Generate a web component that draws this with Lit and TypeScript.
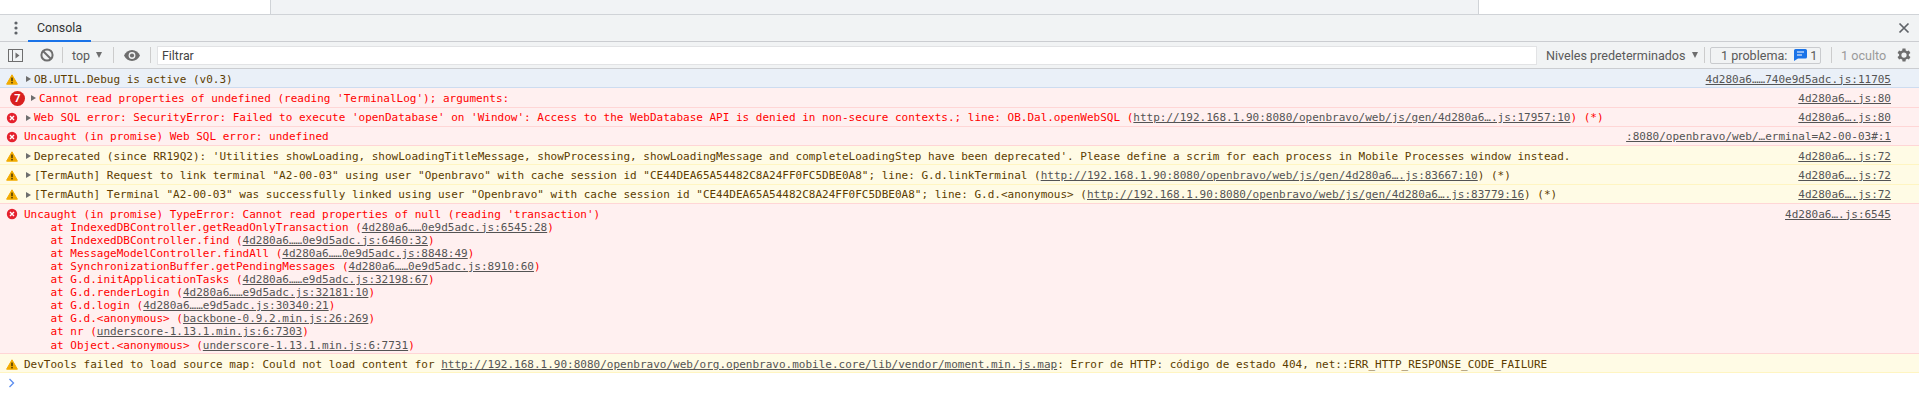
import { LitElement, html, css, svg } from "lit";
import { customElement } from "lit/decorators.js";

const warnIcon = svg`<svg class="ic" width="12" height="11" viewBox="0 0 12 11"><path d="M6 .8 L11.4 10.2 H.6 Z" fill="#f2ab00" stroke="#f2ab00" stroke-linejoin="round"/><rect x="5.3" y="3.6" width="1.4" height="3.6" fill="#3d2f00"/><rect x="5.3" y="8" width="1.4" height="1.4" fill="#3d2f00"/></svg>`;
const errIcon = svg`<svg class="ic" width="12" height="12" viewBox="0 0 12 12"><circle cx="6" cy="6" r="5.2" fill="#e5222e"/><path d="M4 4 L8 8 M8 4 L4 8" stroke="#fff" stroke-width="1.4"/></svg>`;
const A = (t: string) => html`<a>${t}</a>`;
const BASE = "http://192.168.1.90:8080/openbravo/web/js/gen/4d280a6….js";

type Row = { kind: string; icon: any; arrow?: boolean; msg: any; src: string; badge?: boolean };
const rows: Row[] = [
  { kind: "info", icon: warnIcon, arrow: true, msg: "OB.UTIL.Debug is active (v0.3)", src: "4d280a6……740e9d5adc.js:11705" },
  { kind: "err", icon: null, badge: true, arrow: true, msg: "Cannot read properties of undefined (reading 'TerminalLog'); arguments: ", src: "4d280a6….js:80" },
  { kind: "err", icon: errIcon, arrow: true, msg: html`Web SQL error: SecurityError: Failed to execute 'openDatabase' on 'Window': Access to the WebDatabase API is denied in non-secure contexts.; line: OB.Dal.openWebSQL (${A(BASE + ":17957:10")}) (*)`, src: "4d280a6….js:80" },
  { kind: "err", icon: errIcon, msg: "Uncaught (in promise) Web SQL error: undefined", src: ":8080/openbravo/web/…erminal=A2-00-03#:1" },
  { kind: "warn", icon: warnIcon, arrow: true, msg: "Deprecated (since RR19Q2): 'Utilities showLoading, showLoadingTitleMessage, showProcessing, showLoadingMessage and completeLoadingStep have been deprecated'. Please define a scrim for each process in Mobile Processes window instead.", src: "4d280a6….js:72" },
  { kind: "warn", icon: warnIcon, arrow: true, msg: html`[TermAuth] Request to link terminal "A2-00-03" using user "Openbravo" with cache session id "CE44DEA65A54482C8A24FF0FC5DBE0A8"; line: G.d.linkTerminal (${A(BASE + ":83667:10")}) (*)`, src: "4d280a6….js:72" },
  { kind: "warn", icon: warnIcon, arrow: true, msg: html`[TermAuth] Terminal "A2-00-03" was successfully linked using user "Openbravo" with cache session id "CE44DEA65A54482C8A24FF0FC5DBE0A8"; line: G.d.&lt;anonymous&gt; (${A(BASE + ":83779:16")}) (*)`, src: "4d280a6….js:72" },
  {
    kind: "err", icon: errIcon, src: "4d280a6….js:6545",
    msg: html`Uncaught (in promise) TypeError: Cannot read properties of null (reading 'transaction')
    at IndexedDBController.getReadOnlyTransaction (${A("4d280a6……0e9d5adc.js:6545:28")})
    at IndexedDBController.find (${A("4d280a6……0e9d5adc.js:6460:32")})
    at MessageModelController.findAll (${A("4d280a6……0e9d5adc.js:8848:49")})
    at SynchronizationBuffer.getPendingMessages (${A("4d280a6……0e9d5adc.js:8910:60")})
    at G.d.initApplicationTasks (${A("4d280a6……e9d5adc.js:32198:67")})
    at G.d.renderLogin (${A("4d280a6……e9d5adc.js:32181:10")})
    at G.d.login (${A("4d280a6……e9d5adc.js:30340:21")})
    at G.d.&lt;anonymous&gt; (${A("backbone-0.9.2.min.js:26:269")})
    at nr (${A("underscore-1.13.1.min.js:6:7303")})
    at Object.&lt;anonymous&gt; (${A("underscore-1.13.1.min.js:6:7731")})`,
  },
  { kind: "warn last", icon: warnIcon, msg: html`DevTools failed to load source map: Could not load content for ${A("http://192.168.1.90:8080/openbravo/web/org.openbravo.mobile.core/lib/vendor/moment.min.js.map")}: Error de HTTP: código de estado 404, net::ERR_HTTP_RESPONSE_CODE_FAILURE`, src: "" },
];

@customElement("app-root")
export class AppRoot extends LitElement {
  static styles = css`
    :host { display: block; width: 1919px; height: 401px; background: #fff; overflow: hidden; font-family: Roboto, "Liberation Sans", sans-serif; font-size: 12px; color: #5a5a5a; }
    .page { display: grid; grid-template-columns: 270px 1fr 440px; height: 14px; border-bottom: 1px solid #d0d3d7; }
    .page .mid { background: #f1f3f5; border-left: 1px solid #d0d3d7; border-right: 1px solid #d0d3d7; }
    .tabs { display: flex; align-items: stretch; height: 26px; background: #f1f3f4; border-bottom: 1px solid #cbcdd1; }
    .kebab { width: 28px; display: flex; align-items: center; justify-content: center; padding-left: 4px; box-sizing: border-box; }
    .tab { width: 63px; display: flex; align-items: center; justify-content: center; color: #333; border-bottom: 2px solid #1a73e8; margin-bottom: -1px; font-size: 12.4px; }
    .grow { flex: 1; }
    .close { width: 30px; display: flex; align-items: center; justify-content: center; }
    .bar { display: flex; align-items: center; height: 26px; background: #f1f3f4; border-bottom: 1px solid #cbcdd1; }
    .tool { display: flex; align-items: center; justify-content: center; }
    .tool.w31 { width: 31px; }
    .tool.w36 { width: 36px; }
    .sep { width: 1px; height: 16px; background: #ccc; flex: none; }
    .ctx { display: flex; align-items: center; gap: 6px; width: 50px; padding-left: 9px; box-sizing: border-box; font-size: 12.4px; }
    .tri { width: 0; height: 0; border-left: 3.5px solid transparent; border-right: 3.5px solid transparent; border-top: 6px solid #6e6e6e; }
    .filter { flex: 1; height: 19px; box-sizing: border-box; margin: 0 9px 0 6px; padding-left: 4px; background: #fff; border: 1px solid #e2e3e5; display: flex; align-items: center; color: #444; font-size: 12.4px; }
    .levels { display: flex; align-items: center; gap: 6px; width: 158px; font-size: 12.6px; white-space: nowrap; flex: none; }
    .issues { display: flex; align-items: center; box-sizing: border-box; width: 111px; height: 17px; margin-left: 5px; margin-right: 10px; padding-left: 10px; border: 1px solid #c9cbce; border-radius: 2px; font-size: 12.6px; white-space: nowrap; flex: none; }
    .issues svg { margin: 0 3px 0 7px; }
    .hidden { color: #9a9a9a; width: 63px; padding-left: 9px; font-size: 12.6px; box-sizing: border-box; white-space: nowrap; flex: none; }
    .gear { margin-right: 6px; flex: none; }
    .log { font-family: "DejaVu Sans Mono", monospace; font-size: 11px; line-height: 13.1px; }
    .row { display: flex; box-sizing: border-box; padding: 3.5px 28px 1.5px 0; border-bottom: 1px solid; min-height: 19.3px; white-space: pre; }
    .icon { width: 24px; flex: none; display: flex; justify-content: flex-start; padding-left: 6px; box-sizing: border-box; height: 13px; align-items: center; }
    .icon.badged { width: 29px; padding-left: 0; }
    .ic { display: block; }
    .arrow { width: 10px; flex: none; height: 13px; display: flex; align-items: center; }
    .arrow i { display: block; width: 0; height: 0; border-top: 3.5px solid transparent; border-bottom: 3.5px solid transparent; border-left: 5.5px solid #6e6e6e; margin-left: 2px; }
    .msg { flex: 1; min-width: 0; }
    .src { flex: none; color: #545454; text-decoration: underline; }
    a { color: #545454; text-decoration: underline; }
    .info { background: #eaf0f8; border-color: #cddcf0; color: #5c3c00; }
    .err { background: #fff0f0; border-color: #ffd6d6; color: #f00; }
    .warn { background: #fffbe5; border-color: #fff5c2; color: #5c3c00; }
    .warn.pre { border-color: #ffd6d6; }
    .badge { width: 15px; height: 15px; margin-left: 10px; border-radius: 50%; background: #d9201f; color: #fff; font: bold 11px/15px Roboto, sans-serif; text-align: center; flex: none; }
    .prompt { height: 20px; display: flex; align-items: center; padding-left: 8px; }
  `;

  render() {
    return html`
      <div class="page"><div></div><div class="mid"></div><div></div></div>
      <div class="tabs">
        <div class="kebab"><svg width="4" height="14" viewBox="0 0 4 14" fill="#5f6368"><circle cx="2" cy="2" r="1.6"/><circle cx="2" cy="7" r="1.6"/><circle cx="2" cy="12" r="1.6"/></svg></div>
        <div class="tab">Consola</div>
        <div class="grow"></div>
        <div class="close"><svg width="12" height="12" viewBox="0 0 12 12"><path d="M1.5 1.5 L10.5 10.5 M10.5 1.5 L1.5 10.5" stroke="#5f6368" stroke-width="1.7"/></svg></div>
      </div>
      <div class="bar">
        <div class="tool w31"><svg width="15" height="13" viewBox="0 0 15 13"><rect x=".5" y=".5" width="14" height="12" fill="none" stroke="#6e6e6e"/><path d="M4.5 .5 V12.5" stroke="#6e6e6e"/><path d="M7.5 3.5 L11.5 6.5 L7.5 9.5 Z" fill="#6e6e6e"/></svg></div>
        <div class="tool w31"><svg width="14" height="14" viewBox="0 0 14 14" fill="none" stroke="#6e6e6e" stroke-width="2"><circle cx="7" cy="7" r="5.6"/><path d="M3 3 L11 11"/></svg></div>
        <div class="sep"></div>
        <div class="ctx">top <span class="tri"></span></div>
        <div class="sep"></div>
        <div class="tool w36"><svg width="16" height="11" viewBox="0 0 16 11"><path d="M8 0 C4.4 0 1.6 2.2 0 5.5 C1.6 8.8 4.4 11 8 11 C11.6 11 14.4 8.8 16 5.5 C14.4 2.2 11.6 0 8 0 Z" fill="#6e6e6e"/><circle cx="8" cy="5.5" r="3.4" fill="#f1f3f4"/><circle cx="8" cy="5.5" r="2.1" fill="#6e6e6e"/></svg></div>
        <div class="sep"></div>
        <div class="filter">Filtrar</div>
        <div class="levels">Niveles predeterminados <span class="tri"></span></div>
        <div class="sep"></div>
        <div class="issues">1 problema:<svg width="13" height="12" viewBox="0 0 13 12"><path d="M1.5 0 H11.5 A1.5 1.5 0 0 1 13 1.5 V8 A1.5 1.5 0 0 1 11.5 9.5 H4 L0 12 V1.5 A1.5 1.5 0 0 1 1.5 0 Z" fill="#1a73e8"/><path d="M3 3 H10 M3 6 H8" stroke="#fff" stroke-width="1.2"/></svg>1</div>
        <div class="sep"></div>
        <div class="hidden">1 oculto</div>
        <svg class="gear" width="18" height="18" viewBox="0 0 24 24" fill="#6e6e6e"><path d="M19.4 13a7.5 7.5 0 0 0 0-2l2.1-1.6-2-3.5-2.5 1a7.5 7.5 0 0 0-1.7-1L15 3.2h-4l-.4 2.7a7.5 7.5 0 0 0-1.7 1l-2.5-1-2 3.5L6.5 11a7.5 7.500 0 0 0 0 2l-2.100 1.600 2 3.500 2.500-1c.5.4 1.100.7 1.700 1l.4 2.700h4l.4-2.700c.6-.3 1.200-.6 1.700-1l2.500 1 2-3.500zM13 15.500a3.500 3.500 0 1 1 0-7 3.500 3.500 0 0 1 0 7z" transform="translate(-1 0)"/></svg>
      </div>
      <div class="log">
        ${rows.map((r, i) => html`
          <div class="row ${r.kind} ${rows[i + 1]?.kind === "err" && r.kind === "warn" ? "pre" : ""}">
            ${r.badge
              ? html`<div class="icon badged"><span class="badge">7</span></div>`
              : html`<div class="icon">${r.icon}</div>`}
            ${r.arrow ? html`<div class="arrow"><i></i></div>` : ""}
            <div class="msg">${r.msg}</div>
            ${r.src ? html`<div class="src">${r.src}</div>` : ""}
          </div>`)}
        <div class="prompt"><svg width="7" height="10" viewBox="0 0 7 10" fill="none" stroke="#5b8def" stroke-width="1.3"><path d="M1.5 1 L5.5 5 L1.5 9"/></svg></div>
      </div>
    `;
  }
}
